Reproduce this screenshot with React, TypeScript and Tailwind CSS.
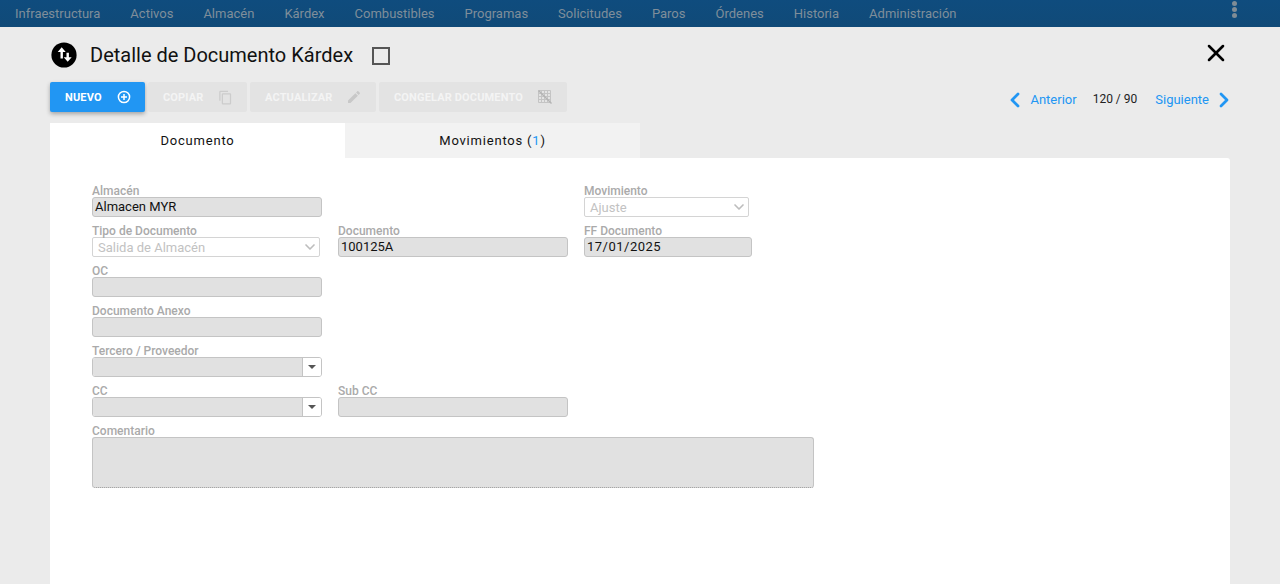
import { ChevronDown, ChevronLeft, ChevronRight, X } from 'lucide-react';

const NAV = ['Infraestructura', 'Activos', 'Almacén', 'Kárdex', 'Combustibles', 'Programas', 'Solicitudes', 'Paros', 'Órdenes', 'Historia', 'Administración'];

function Label({ text }: { text: string }) {
  return <div className="h-[14px] text-[12px] leading-[16px] font-medium text-[#aaaaaa] whitespace-nowrap">{text}</div>;
}

function Field({ label, value, width = 'w-[230px]', spaced = false }: { label: string; value?: string; width?: string; spaced?: boolean }) {
  return (
    <div className={width}>
      <Label text={label} />
      <div className={`h-5 px-[2px] bg-[#e1e1e1] border border-[#c4c4c4] rounded-[3px] text-[13px] leading-[18px] text-[#111111] ${spaced ? 'tracking-[0.5px]' : ''}`}>{value}</div>
    </div>
  );
}

function SelectField({ label, value, width }: { label: string; value: string; width: string }) {
  return (
    <div className={width}>
      <Label text={label} />
      <div className="h-5 pl-[5px] pr-[1px] bg-white border border-[#d4d4d4] rounded-[2px] flex items-center justify-between text-[13px] text-[#c2c2c2]">
        <span className="mt-[1px]">{value}</span>
        <ChevronDown className="w-4 h-4 text-[#bdbdbd]" strokeWidth={2.5} />
      </div>
    </div>
  );
}

function ComboField({ label }: { label: string }) {
  return (
    <div className="w-[230px]">
      <Label text={label} />
      <div className="h-5 flex border border-[#c4c4c4] rounded-[3px] overflow-hidden">
        <div className="flex-1 bg-[#e1e1e1]" />
        <div className="w-[19px] bg-white border-l border-[#c4c4c4] flex items-center justify-center">
          <div className="w-0 h-0 border-x-[4px] border-x-transparent border-t-[4px] border-t-[#555555]" />
        </div>
      </div>
    </div>
  );
}

function ActionButton({ text, width, children }: { text: string; width: string; children: React.ReactNode }) {
  return (
    <div className={`${width} h-[30px] pl-[15px] pr-[14px] bg-[#e3e3e3] rounded-[2px] flex items-center justify-between text-[11px] font-bold tracking-[0.15px] text-[#f4f4f4] whitespace-nowrap`}>
      <span className="mt-[2px]">{text}</span>
      {children}
    </div>
  );
}

export default function App() {
  return (
    <div className="h-[584px] overflow-hidden bg-[#ebebeb] font-['Roboto',sans-serif]">
      <div className="h-[27px] bg-gradient-to-b from-[#0f4c7e] to-[#104a78] flex items-center pl-[15px] pr-[43px] justify-between">
        <div className="flex gap-[30px] text-[13px] font-normal text-[#7f8e9a]">
          {NAV.map((n) => <span key={n}>{n}</span>)}
        </div>
        <div className="flex flex-col gap-[1px] -mt-[9px]">
          <div className="w-[5px] h-[5px] rounded-full bg-[#7f8c96]" />
          <div className="w-[5px] h-[5px] rounded-full bg-[#7f8c96]" />
          <div className="w-[5px] h-[5px] rounded-full bg-[#7f8c96]" />
        </div>
      </div>

      <div className="px-[50px]">
        <div className="h-[55px] flex items-center justify-between">
          <div className="flex items-center">
            <svg viewBox="0 0 26 26" className="w-[26px] h-[26px] ml-[1px]">
              <circle cx="13" cy="13" r="12.6" fill="#000000" />
              <path fill="#ffffff" d="M10.7 5.3L6.7 9.9H9.5V16.5H11.9V9.9H14.7ZM16.7 19.8L12.7 15.2H15.5V10.8H17.9V15.2H20.7Z" />
            </svg>
            <h1 className="ml-[13px] mt-[1px] text-[20px] font-normal text-[#111111]">Detalle de Documento Kárdex</h1>
            <div className="ml-[19px] mt-[2px] w-[18px] h-[18px] border-2 border-[#555555]" />
          </div>
          <X className="w-7 h-7 -mt-[3px] text-black" strokeWidth={2.2} />
        </div>

        <div className="flex items-center justify-between">
          <div className="flex gap-[3px]">
            <div className="w-[95px] h-[30px] pl-[15px] pr-[14px] bg-[#2196f3] rounded-[2px] shadow-[0_2px_4px_rgba(0,0,0,0.3)] flex items-center justify-between text-[11px] font-bold tracking-[0.15px] text-white">
              <span className="mt-[2px]">NUEVO</span>
              <svg viewBox="0 0 14 14" className="w-[14px] h-[14px]" fill="none" stroke="#ffffff" strokeWidth="1.5">
                <circle cx="7" cy="7" r="5.6" />
                <path d="M7 4v6M4 7h6" />
              </svg>
            </div>
            <ActionButton text="COPIAR" width="w-[99px]">
              <svg viewBox="0 0 24 24" className="w-[15px] h-[15px]" fill="#cccccc">
                <path d="M16 1H4c-1.1 0-2 .9-2 2v14h2V3h12V1zm3 4H8c-1.1 0-2 .9-2 2v14c0 1.1.9 2 2 2h11c1.1 0 2-.9 2-2V7c0-1.1-.9-2-2-2zm0 16H8V7h11v14z" />
              </svg>
            </ActionButton>
            <ActionButton text="ACTUALIZAR" width="w-[126px]">
              <svg viewBox="0 0 24 24" className="w-4 h-4" fill="#c8c8c8">
                <path d="M3 17.25V21h3.75L17.81 9.94l-3.75-3.75L3 17.25zM20.71 7.04c.39-.39.39-1.02 0-1.41l-2.34-2.34c-.39-.39-1.02-.39-1.41 0l-1.83 1.83 3.75 3.75 1.83-1.83z" />
              </svg>
            </ActionButton>
            <ActionButton text="CONGELAR DOCUMENTO" width="w-[188px]">
              <svg viewBox="0 0 16 16" className="w-4 h-4" fill="none" stroke="#c4c4c4">
                <path strokeWidth="1" d="M1.5 1.5h12v12h-12zM4.5 1.5v12M7.5 1.5v12M10.5 1.5v12M1.5 4.5h12M1.5 7.5h12M1.5 10.5h12" />
                <path strokeWidth="1.4" stroke="#b4b4b4" d="M1.5 1.5l13 13" />
              </svg>
            </ActionButton>
          </div>
          <div className="flex items-center text-[13px] text-[#2196f3] mt-[6px]">
            <ChevronLeft className="w-6 h-6" strokeWidth={2.8} />
            <span className="ml-[3px]">Anterior</span>
            <span className="ml-[16px] text-[12px] text-[#222222] -mt-[2px]">120 / 90</span>
            <span className="ml-[18px]">Siguiente</span>
            <ChevronRight className="w-6 h-6 ml-[3px] -mr-[6px]" strokeWidth={2.8} />
          </div>
        </div>

        <div className="flex mt-[11px]">
          <div className="w-[295px] h-[35px] bg-white flex items-center justify-center text-[13px] tracking-[0.8px] text-[#111111]">Documento</div>
          <div className="w-[295px] h-[35px] bg-[#f2f2f2] flex items-center justify-center text-[13px] tracking-[0.8px] text-[#111111]">
            <span>Movimientos (<span className="text-[#2196f3]">1</span>)</span>
          </div>
        </div>

        <div className="h-[500px] bg-white rounded-tr-[3px] pt-[25px] pl-[42px] flex flex-col gap-[6px]">
          <div className="flex gap-4 h-[34px]">
            <Field label="Almacén" value="Almacen MYR" />
            <div className="w-[230px]" />
            <SelectField label="Movimiento" value="Ajuste" width="w-[165px]" />
          </div>
          <div className="flex gap-4 h-[34px]">
            <div className="w-[230px]">
              <SelectField label="Tipo de Documento" value="Salida de Almacén" width="w-[228px]" />
            </div>
            <Field label="Documento" value="100125A" />
            <Field label="FF Documento" value="17/01/2025" width="w-[168px]" spaced />
          </div>
          <div className="h-[34px]"><Field label="OC" /></div>
          <div className="h-[34px]"><Field label="Documento Anexo" /></div>
          <div className="h-[34px]"><ComboField label="Tercero / Proveedor" /></div>
          <div className="flex gap-4 h-[34px]">
            <ComboField label="CC" />
            <Field label="Sub CC" />
          </div>
          <div className="w-[722px]">
            <Label text="Comentario" />
            <div className="h-[51px] bg-[#e1e1e1] border border-[#c4c4c4] [border-bottom-style:dotted] border-b-[#999999] rounded-[3px]" />
          </div>
        </div>
      </div>
    </div>
  );
}
